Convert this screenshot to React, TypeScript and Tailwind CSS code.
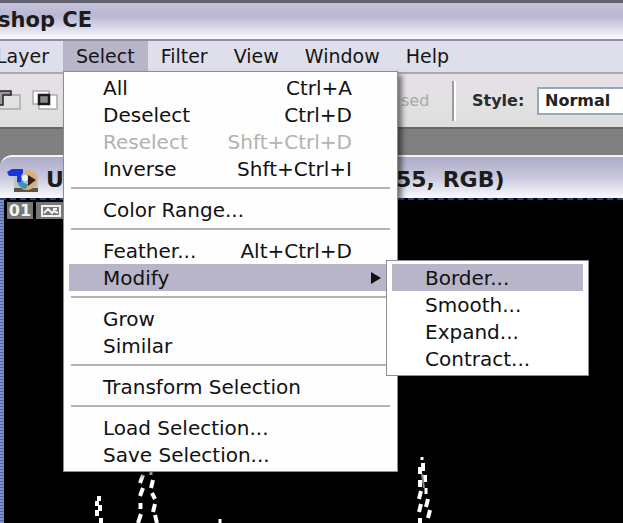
import { useState } from "react";

interface Item {
    label: string;
    keys?: string;
    disabled?: boolean;
    sub?: string[];
}

const GROUPS: Item[][] = [
    [
        { label: "All", keys: "Ctrl+A" },
        { label: "Deselect", keys: "Ctrl+D" },
        { label: "Reselect", keys: "Shft+Ctrl+D", disabled: true },
        { label: "Inverse", keys: "Shft+Ctrl+I" },
    ],
    [{ label: "Color Range..." }],
    [
        { label: "Feather...", keys: "Alt+Ctrl+D" },
        { label: "Modify", sub: ["Border...", "Smooth...", "Expand...", "Contract..."] },
    ],
    [{ label: "Grow" }, { label: "Similar" }],
    [{ label: "Transform Selection" }],
    [{ label: "Load Selection..." }, { label: "Save Selection..." }],
];

const SubMenu: React.FC<{ items: string[] }> = ({ items }) => {
    return (
        <ul className="absolute left-[317px] -top-1 w-[203px] border border-[#8d8b96] bg-white px-[5px] py-[3px]">
            {items.map((item, i) => (
                <li key={item}>
                    <button className={i === 0 ? "flex h-[27px] w-full items-center bg-[#b9b5c9] pl-[33px]" : "flex h-[27px] w-full items-center pl-[33px]"}>
                        {item}
                    </button>
                </li>
            ))}
        </ul>
    );
};

const SelectMenu: React.FC = () => {
    return (
        <div className="absolute left-0 top-[30px] z-10 w-[335px] border border-[#8d8b96] bg-[#fefefe] px-[5px] pb-[3px] pt-[2px] text-[20px] text-[#111] shadow-[4px_4px_5px_rgba(0,0,0,0.5)]">
            {GROUPS.map((group, i) => (
                <ul key={i} className={i > 0 ? "mt-[5px] before:mx-[2px] before:mb-[7px] before:block before:h-[2px] before:bg-[#b4b3b6]" : ""}>
                    {group.map((item) => (
                        <li key={item.label} className="relative">
                            <button
                                disabled={item.disabled}
                                className={
                                    item.sub
                                        ? "flex h-[27px] w-full items-center bg-[#b9b5c9] pl-[34px]"
                                        : "flex h-[27px] w-full items-center pl-[34px] disabled:text-[#b3b2ab]"
                                }
                            >
                                <span>{item.label}</span>
                                <span className="ml-auto">{item.keys}</span>
                                <span className="flex w-10 justify-end pr-[11px]">
                                    {item.sub && <svg width="10" height="12" viewBox="0 0 10 12"><path d="M0 0L10 6L0 12Z" fill="#111" /></svg>}
                                </span>
                            </button>
                            {item.sub && <SubMenu items={item.sub} />}
                        </li>
                    ))}
                </ul>
            ))}
        </div>
    );
};

const MenuBar: React.FC = () => {
    const [open, setOpen] = useState(true);

    return (
        <nav className="flex h-[33px] shrink-0 border-b-2 border-[#a9a8ae] bg-[#dfdfeb] text-[19px] leading-none text-[#151515]">
            <button className="flex w-[63px] items-center justify-end overflow-hidden pr-[14px]">Layer</button>
            <div className="relative">
                <button className="h-full bg-[#b9b5c9] px-[13px]" onClick={() => setOpen(!open)}>Select</button>
                {open && <SelectMenu />}
            </div>
            <button className="px-[13px]">Filter</button>
            <button className="px-[13px]">View</button>
            <button className="px-[13px]">Window</button>
            <button className="px-[13px]">Help</button>
        </nav>
    );
};

const OptionsBar: React.FC = () => {
    return (
        <div className="flex h-[55px] shrink-0 items-center border-b-2 border-[#666] bg-linear-to-b from-[#e6dfe8] via-[#e2e2e3] to-[#dedede] text-base">
            <button aria-label="Subtract from selection" className="w-[32px] shrink-0">
                <svg width="22" height="24" viewBox="0 0 22 24" fill="none">
                    <path d="M8 6h12v14H-2V14" stroke="#aaa" strokeWidth="1.5" />
                    <path d="M-2 2h13v4H3v10H-2" fill="#999" stroke="#222" strokeWidth="1.5" />
                </svg>
            </button>
            <button aria-label="Intersect with selection" className="shrink-0">
                <svg width="28" height="24" viewBox="0 0 28 24">
                    <rect x="1" y="2" width="16" height="13" fill="#fff" stroke="#aaa" strokeWidth="1.5" />
                    <rect x="7" y="6" width="18" height="14" fill="#fff" stroke="#aaa" strokeWidth="1.5" />
                    <rect x="7" y="6" width="10" height="9" fill="#8b8b94" stroke="#1b1b1b" strokeWidth="2.5" />
                </svg>
            </button>
            <span className="ml-[341px] w-[51px] shrink-0 text-[#aaa8ae]">sed</span>
            <span className="h-10 w-[4px] shrink-0 border-l-2 border-r-2 border-l-[#9c9ba3] border-r-white" />
            <label htmlFor="style" className="ml-4 w-[65px] shrink-0 font-bold text-[#2b2b2b]">Style:</label>
            <select id="style" className="h-7 w-0 flex-1 appearance-none border-2 border-r-0 border-[#93a9bd] bg-white pl-[6px] font-bold text-[#222]">
                <option>Normal</option>
            </select>
        </div>
    );
};

const DocumentTitle: React.FC = () => {
    return (
        <div className="flex h-[43px] shrink-0 items-center rounded-tl-xl border-t-2 border-[#f4f3fa] bg-linear-to-b from-[#adabc9] via-[#c9c8dc] to-[#fafafd] pl-[7px] pt-1 text-[22px] font-bold text-[#1c1c1c]">
            <svg width="33" height="28" viewBox="0 0 33 28" className="shrink-0">
                <rect x="7" y="3" width="24" height="23" fill="#b9c4c8" />
                <path d="M7 22h24v4H7Z" fill="#615447" />
                <circle cx="20" cy="14" r="10" fill="#9ccbdc" />
                <path d="M18 4c8-1 14 5 12 12c-2 7-9 9-15 7l5-6l-3-7Z" fill="#dcae7d" />
                <path d="M21 9l8 5l-8 6Z" fill="#2c211d" />
                <path d="M10 12c0 7 3 10 9 11l2-5c-4 0-6-2-6-7Z" fill="#3c91b9" />
                <circle cx="18" cy="12" r="3" fill="#f1f5f4" />
                <path d="M0 6l5-3h11v4l-2 3v6h-4v-6H2Z" fill="#1a35dd" />
            </svg>
            <span className="ml-[6px] w-[350px] shrink-0">U</span>
            <span className="whitespace-nowrap">55, RGB)</span>
        </div>
    );
};

const Canvas: React.FC = () => {
    return (
        <div className="relative flex-1 overflow-hidden border-t-2 border-dashed border-[#2b4379] bg-black">
            <div className="absolute inset-y-0 left-0 w-1 bg-[repeating-linear-gradient(#7f8fc9_0_2px,#5366a4_2px_3px)]" />
            <div className="absolute left-[7px] top-[2px] flex gap-[3px] text-base leading-none font-bold text-[#f2f2f2]">
                <span className="flex h-[17px] w-[26px] items-center justify-center bg-[#777]">01</span>
                <span className="flex h-[17px] w-[30px] items-center justify-center bg-[#777]">
                    <svg width="20" height="12" viewBox="0 0 20 12" fill="none" stroke="#f2f2f2" strokeWidth="2">
                        <rect x="1" y="1" width="18" height="10" />
                        <path d="M3 8l4-4l4 4l2-2l4 2M12 4h4" />
                    </svg>
                </span>
            </div>
            {/* selection outline */}
            <svg className="absolute left-0 top-0" width="623" height="323" viewBox="0 200 623 323" fill="none" stroke="#fff" strokeWidth="4">
                <path d="M99 496v5M97 501v5M100 505v6M97 510v6M101 518v5" />
                <path d="M143 475l-3 8M143 488l-3 8M140.500 503v6M141 514l-3 9" />
                <path d="M153 480l-2 8M152 493l3 6M155 504l-2 8M155 515l2 8" />
                <path d="M151 472v3M220 519v4" strokeWidth="3" />
                <path d="M422 457v3" strokeWidth="3" />
                <path d="M423 463v8M420 467v7M425 475v7M420 480v7" />
                <path d="M422 474l2 14" stroke="#888" strokeWidth="2" />
                <path d="M421 491l-2 8M421 504l-2 8M420 518v5M428 499l-2 8M430 510l-2 8" />
                <path d="M426 488v6" strokeWidth="3" />
            </svg>
        </div>
    );
};

export default function App() {
    return (
        <div className="flex h-screen flex-col overflow-hidden bg-[#808080] font-['DejaVu_Sans',Verdana,sans-serif]">
            <header className="flex h-[41px] shrink-0 items-center border-b-2 border-t-3 border-b-[#8f8da6] border-t-[#656372] bg-linear-to-b from-[#c6c4dc] via-[#b9b7d1] via-35% to-[#fafafd]">
                <h1 className="flex w-[92px] justify-end overflow-hidden whitespace-nowrap text-[21px] font-bold text-[#1c1c1c]">shop CE</h1>
            </header>
            <MenuBar />
            <OptionsBar />
            <main className="flex flex-1 flex-col pt-[26px]">
                <DocumentTitle />
                <Canvas />
            </main>
        </div>
    );
}
